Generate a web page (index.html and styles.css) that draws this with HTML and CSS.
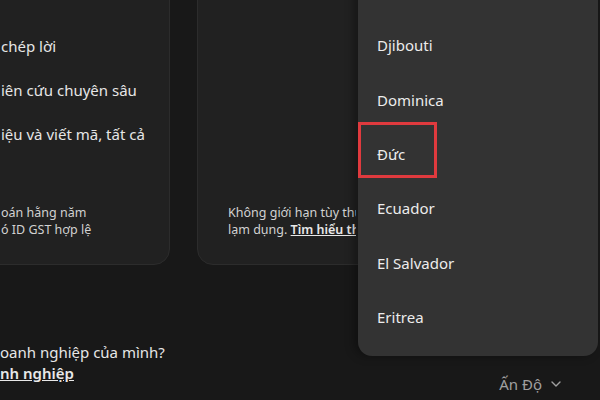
FILE: index.html
```html
<!DOCTYPE html>
<html lang="vi">
<head>
    <meta charset="UTF-8">
    <meta name="viewport" content="width=device-width, initial-scale=1.0">
    <title>Gói doanh nghiệp</title>
    <link rel="stylesheet" href="styles.css">
</head>
<body>
    <div class="page">
        <div class="plans">
            <div class="card card-left">
                <ul class="features">
                    <li>chép lời</li>
                    <li>iên cứu chuyên sâu</li>
                    <li>iệu và viết mã, tất cả</li>
                </ul>
                <p class="note">oán hằng năm<br>ó ID GST hợp lệ</p>
            </div>

            <div class="card card-right">
                <p class="note clipped">Không giới hạn tùy thu<br>lạm dụng. <a href="#">Tìm hiểu th</a></p>
            </div>
        </div>

        <div class="footer">
            <div class="business">
                <p>oanh nghiệp của mình?</p>
                <a href="#">nh nghiệp</a>
            </div>
            <button class="region">Ấn Độ
                <svg width="12" height="12" viewBox="0 0 12 12"><path d="M2 4 L6 8 L10 4" fill="none" stroke="currentColor" stroke-width="1.4" stroke-linecap="round" stroke-linejoin="round"/></svg>
            </button>
        </div>

        <!-- danh sách quốc gia đang mở -->
        <ul class="dropdown">
            <li>Djibouti</li>
            <li>Dominica</li>
            <li class="selected">Đức</li>
            <li>Ecuador</li>
            <li>El Salvador</li>
            <li>Eritrea</li>
        </ul>
    </div>
</body>
</html>
```

FILE: styles.css
```css
body {
    margin: 0;
    background-color: #181818;
    font-family: 'Noto Sans', 'Open Sans', sans-serif;
    color: #e6e6e6;
    overflow: hidden;
}

.page {
    position: relative;
    width: 600px;
    height: 400px;
    overflow: hidden;
}

.plans {
    display: flex;
    gap: 27px;
    margin-top: -20px;
    margin-left: -20px;
}

.card {
    flex-shrink: 0;
    background: #212121;
    border: 1px solid #2c2c2c;
    border-radius: 16px;
    height: 285px;
    box-sizing: border-box;
    display: flex;
    flex-direction: column;
}

.card-left {
    width: 190px;
    padding-left: 20px;
}

.card-right {
    width: 400px;
    padding-left: 30px;
}

.features {
    list-style: none;
    margin: 0;
    padding: 0;
    padding-top: 55px;
}

.features li {
    font-size: 15px;
    line-height: 20px;
    margin-bottom: 24px;
    white-space: nowrap;
}

.note {
    margin: auto 0 26px 0;
    font-size: 12.5px;
    line-height: 17px;
    color: #d2d2d2;
    white-space: nowrap;
}

.clipped {
    width: 128px;
    overflow: hidden;
}

.note a {
    color: #e8e8e8;
    font-weight: 600;
}

.footer {
    display: flex;
    justify-content: space-between;
    align-items: flex-start;
    padding-top: 77px;
}

.business p {
    margin: 0;
    font-size: 15px;
    line-height: 20px;
}

.business a {
    font-size: 15px;
    line-height: 20px;
    color: #e8e8e8;
    font-weight: 600;
}

.region {
    background: none;
    border: none;
    font-family: inherit;
    font-size: 15px;
    color: #a0a0a0;
    display: flex;
    align-items: center;
    gap: 8px;
    margin-top: 32px;
    margin-right: 38px;
    padding: 0;
}

.dropdown {
    position: absolute;
    left: 358px;
    top: -20px;
    width: 240px;
    height: 376px;
    margin: 0;
    padding: 0;
    padding-top: 38px;
    box-sizing: border-box;
    list-style: none;
    background: #333333;
    border-radius: 14px;
    box-shadow: -4px 0 10px rgba(0,0,0,0.35);
}

.dropdown li {
    height: 54.6px;
    line-height: 54px;
    padding-left: 19px;
    font-size: 15px;
    color: #ececec;
    box-sizing: border-box;
}

.dropdown .selected {
    width: 79px;
    height: 56px;
    border: 3px solid #e03a3e;
    padding-left: 16px;
    padding-top: 7px;
    line-height: 44px;
    margin-top: -5px;
    margin-bottom: 3px;
}
```
